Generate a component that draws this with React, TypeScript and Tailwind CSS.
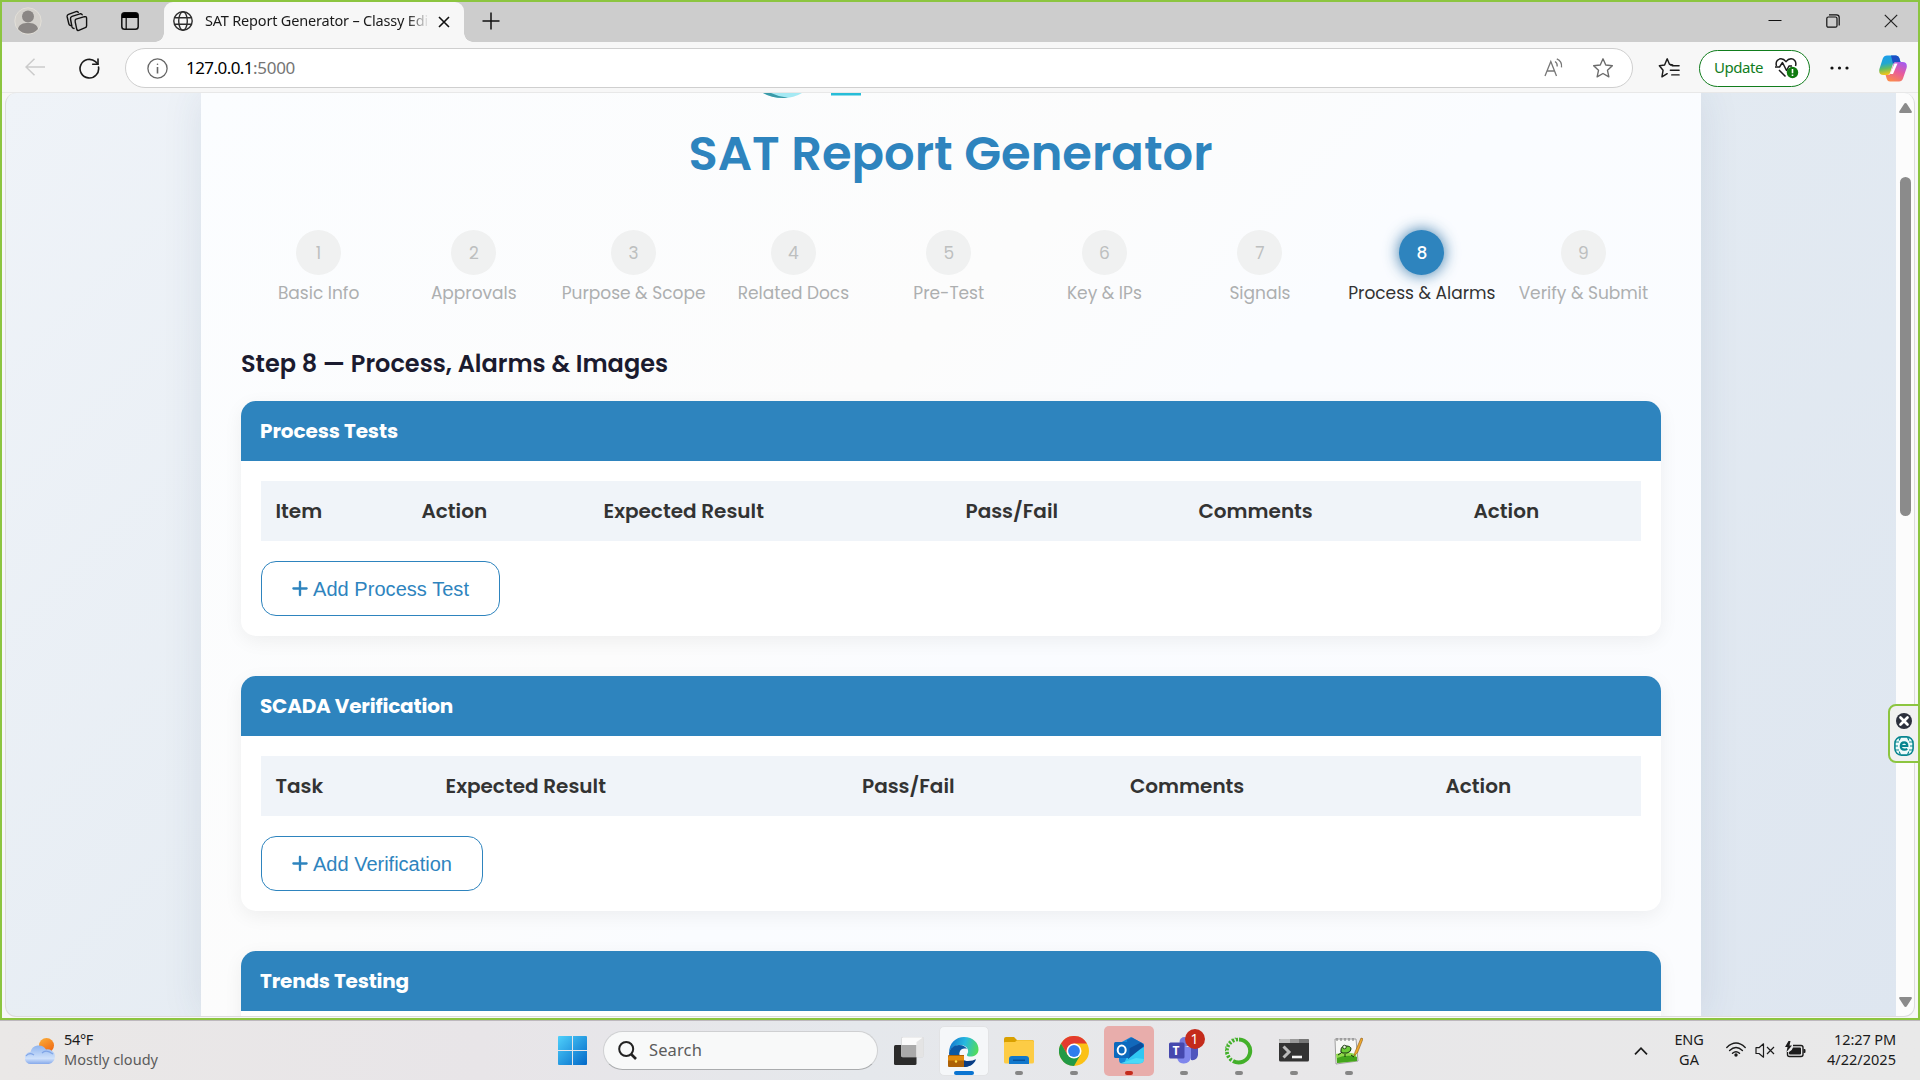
import { useLayoutEffect, useRef, type ReactNode } from "react";
import { FaPlus } from "react-icons/fa6";

/* Single line of text whose letter spacing is tuned so it spans `w` pixels. */
function Fit({ w, className = "", children }: { w: number; className?: string; children: string }) {
  const ref = useRef<HTMLSpanElement>(null);
  useLayoutEffect(() => {
    const el = ref.current;
    if (!el) return;
    el.style.letterSpacing = "0px";
    const natural = el.getBoundingClientRect().width;
    const gap = (w - natural) / children.length;
    el.style.letterSpacing = `${gap}px`;
  }, [w, children]);
  return (
    <span ref={ref} className={"inline-block shrink-0 whitespace-nowrap " + className}>
      {children}
    </span>
  );
}

const steps = [
  { label: "Basic Info", cell: "w-[155.2px]" },
  { label: "Approvals", cell: "w-[155.2px]" },
  { label: "Purpose & Scope", cell: "w-[164.4px]" },
  { label: "Related Docs", cell: "w-[155.2px]" },
  { label: "Pre-Test", cell: "w-[155.6px]" },
  { label: "Key & IPs", cell: "w-[155.6px]" },
  { label: "Signals", cell: "w-[155.6px]" },
  { label: "Process & Alarms", cell: "w-[168.2px]" },
  { label: "Verify & Submit", cell: "w-[155px]" },
];

function Stepper() {
  return (
    <div className="flex h-[76px]">
      {steps.map((s, i) => {
        const on = i === 7;
        return (
          <div key={s.label} className={"flex shrink-0 flex-col items-center " + s.cell}>
            <div
              className={
                "flex h-[45px] w-[45px] shrink-0 items-center justify-center rounded-full pt-px text-[17px] leading-none " +
                (on
                  ? "bg-[#2e84be] font-medium text-white shadow-[0_0_15px_rgba(32,105,160,0.9)]"
                  : "bg-[#f0f1f1] text-[#bdbfbf]")
              }
            >
              {i + 1}
            </div>
            <div className={"mt-[6px] whitespace-nowrap text-[17px] leading-6 " + (on ? "text-[#333]" : "text-[#adafb0]")}>
              {s.label}
            </div>
          </div>
        );
      })}
    </div>
  );
}

type Col = { label: string; cell: string };

function Card({ title, titleW, cols, button, buttonW }: { title: string; titleW: number; cols?: Col[]; button?: string; buttonW?: number }) {
  return (
    <section className="mb-10 h-[235px] shrink-0 overflow-hidden rounded-[15px] bg-white shadow-[0_5px_19px_rgba(0,0,0,0.06)]">
      <header className="flex h-[60px] items-center bg-[#2e84be] pl-[19px] text-[20px] font-bold text-white">
        <Fit w={titleW}>{title}</Fit>
      </header>
      {cols && button && buttonW && (
        <div className="p-5">
          <div className="flex h-[60px] items-center bg-[#f0f4f9] pl-[14.5px] text-[20px] font-semibold text-[#333]">
            {cols.map((c, i) => (
              <div key={i} className={"shrink-0 " + c.cell}>
                {c.label}
              </div>
            ))}
          </div>
          <button className="mt-5 flex h-[55px] items-center rounded-[15px] border border-[#2e84be] pl-[29px] pr-[30px] font-['Liberation_Sans',sans-serif] text-[20px] text-[#2e84be]">
            <FaPlus className="mr-[4px] h-[19px] w-[18px]" />
            <Fit w={buttonW}>{button}</Fit>
          </button>
        </div>
      )}
    </section>
  );
}

const processCols: Col[] = [
  { label: "Item", cell: "w-[146px]" },
  { label: "Action", cell: "w-[182px]" },
  { label: "Expected Result", cell: "w-[362px]" },
  { label: "Pass/Fail", cell: "w-[233px]" },
  { label: "Comments", cell: "w-[275px]" },
  { label: "Action", cell: "w-[80px]" },
];
const scadaCols: Col[] = [
  { label: "Task", cell: "w-[170px]" },
  { label: "Expected Result", cell: "w-[416.5px]" },
  { label: "Pass/Fail", cell: "w-[268px]" },
  { label: "Comments", cell: "w-[315.5px]" },
  { label: "Action", cell: "w-[80px]" },
];

function TabBar() {
  return (
    <div className="flex h-10 items-center bg-[#cdcdcd] pb-0.5">
      <svg className="ml-3 h-7 w-7" viewBox="0 0 28 28">
        <circle cx="14" cy="14" r="13.2" fill="#d3d0cb" stroke="#e2dfd8" strokeWidth="1" />
        <circle cx="14" cy="9.5" r="6" fill="#8a8684" />
        <path d="M4 22c1-5 5-6 10-6s9 1 10 6c-5 6-15 6-20 0z" fill="#8a8684" />
      </svg>
      <svg className="ml-[24px] h-[22px] w-[22px]" viewBox="0 0 22 22" fill="none" stroke="#111" strokeWidth="1.4" strokeLinejoin="round" strokeLinecap="round">
        <path d="M10 9.2l8.500-2.500q2-.5 2.100 1.500v7.500q0 1.500-1.300 2l-6.500 2.600q-1.600.5-2-1l-1.600-7.500q-.4-2 .8-2.600z" />
        <path d="M8 18.500q-1.600-.2-2-1.500L4.500 9q-.3-2 1.500-2.600L14 3.800q1.700-.4 2.200 1" />
        <path d="M4.500 15.500q-1.300-.3-1.600-1.500L1.200 7q-.4-2 1.300-2.600L10 1.600q1.500-.5 2.300.7" />
      </svg>
      <svg className="ml-[33px] h-[18px] w-[18px]" viewBox="0 0 18 18">
        <rect x=".8" y=".8" width="16.400" height="16.400" rx="2.800" fill="none" stroke="#111" strokeWidth="1.500" />
        <path d="M1 6V3q0-2 2-2h12q2 0 2 2v3z" fill="#000" />
        <path d="M5.200 6v11" stroke="#111" strokeWidth="1.300" />
      </svg>
      <div className="relative ml-[25px] flex h-10 w-[300px] items-center self-start rounded-t-[9px] bg-[#f7f7f7] pb-0.5">
        <span className="absolute bottom-0 left-[-9px] h-[9px] w-[9px] bg-[radial-gradient(circle_at_0_0,#cdcdcd_8.5px,#f7f7f7_9px)]" />
        <span className="absolute bottom-0 right-[-9px] h-[9px] w-[9px] bg-[radial-gradient(circle_at_100%_0,#cdcdcd_8.5px,#f7f7f7_9px)]" />
        <svg className="ml-[9px] h-5 w-5" viewBox="0 0 20 20" fill="none" stroke="#2d2d2d" strokeWidth="1.400">
          <circle cx="10" cy="10" r="9.200" />
          <ellipse cx="10" cy="10" rx="4.300" ry="9.200" />
          <path d="M1.600 6.700h16.800M1.600 13.300h16.800" />
        </svg>
        <div className="-mt-0.5 ml-[12px] flex w-[224px] overflow-hidden bg-linear-to-r from-[#1a1a1a] from-90% to-[#f7f7f7] bg-clip-text font-['Noto_Sans',sans-serif] text-[14.500px] leading-6 text-transparent">
          <Fit w={223}>SAT Report Generator – Classy Edi</Fit>
        </div>
        <svg className="ml-[9px] mt-0.5 h-3 w-3" viewBox="0 0 12 12" stroke="#111" strokeWidth="1.600">
          <path d="M1 1l10 10M11 1L1 11" />
        </svg>
      </div>
      <svg className="ml-[18px] h-[18px] w-[18px]" viewBox="0 0 18 18" stroke="#111" strokeWidth="1.500">
        <path d="M9 .5v17M.5 9h17" />
      </svg>
      <div className="ml-auto mr-[20px] flex items-center">
        <svg className="h-[14px] w-[14px]" viewBox="0 0 14 14" stroke="#111" strokeWidth="1">
          <path d="M.5 6.500h13" />
        </svg>
        <svg className="ml-[44px] h-[14px] w-[14px]" viewBox="0 0 14 14" fill="none" stroke="#111" strokeWidth="1.200">
          <rect x=".8" y="3" width="10.200" height="10.200" rx="1.500" />
          <path d="M3 .8h7.500q2.700 0 2.700 2.700v8" />
        </svg>
        <svg className="ml-[44px] h-[14px] w-[14px]" viewBox="0 0 14 14" stroke="#222" strokeWidth="1.200">
          <path d="M.8.8l12.400 12.400M13.200.8L.8 13.200" />
        </svg>
      </div>
    </div>
  );
}

function Toolbar() {
  return (
    <div className="flex h-[51px] items-center border-b border-[#e8e8e8] bg-[#f7f7f7] pt-0.5 font-['Noto_Sans',sans-serif]">
      <svg className="ml-[23px] h-[18px] w-5 -translate-y-px" viewBox="0 0 20 18" fill="none" stroke="#cbcbcb" strokeWidth="1.500">
        <path d="M20 9H1M9.500.7L1 9l8.500 8.300" />
      </svg>
      <svg className="ml-[34px] h-[21px] w-[21px]" viewBox="0 0 21 21" fill="none" stroke="#1b1b1b" strokeWidth="1.600" strokeLinecap="round">
        <path d="M19.500 9a9.300 9.300 0 1 1-3-5.300L18.800 6" />
        <path d="M19 1v5.300h-5.300" />
      </svg>
      <div className="ml-[25px] flex h-10 w-[1508px] shrink-0 items-center rounded-full border border-[#cfcfcf] bg-white">
        <svg className="ml-[21px] h-[21px] w-[21px]" viewBox="0 0 21 21" fill="none" stroke="#666" strokeWidth="1.300">
          <circle cx="10.500" cy="10.500" r="9.600" />
          <path d="M10.500 9v6.500" strokeWidth="1.600" />
          <circle cx="10.500" cy="6.300" r=".8" fill="#666" stroke="none" />
        </svg>
        <div className="-mt-0.5 ml-[18px] flex text-[17px] leading-none text-black">
          <Fit w={67}>127.0.0.1</Fit>
          <Fit w={42} className="text-[#757575]">:5000</Fit>
        </div>
        <svg className="ml-auto h-5 w-[20px]" viewBox="0 0 20 20" fill="none" stroke="#777" strokeWidth="1.300">
          <path d="M1 18L6.800 3.500 12.500 18M3 13h7.700" />
          <path d="M11 3.500q2.500 1.500 2.200 5M12.800.9q5.500 2.500 4.700 8.500" />
        </svg>
        <svg className="ml-[28px] mr-[18px] h-[22px] w-[22px]" viewBox="0 0 24 24" fill="none" stroke="#6b6b6b" strokeWidth="1.500" strokeLinejoin="round">
          <path d="M12 2l3 6.700 7.200.8-5.300 5 1.500 7.200L12 18l-6.400 3.700 1.500-7.200-5.300-5 7.200-.8z" />
        </svg>
      </div>
      <svg className="ml-[25px] h-[22px] w-[22px] shrink-0" viewBox="0 0 24 24" fill="none" stroke="#1b1b1b" strokeWidth="1.600" strokeLinejoin="round" strokeLinecap="round">
        <path d="M13.500 8.700H16L12.500 8 10 2 7.200 8.700 1.500 9.500l4 5L4.300 21.700l5.700-3.500M15.500 9.500H23M13.500 14.500H23M15 19.500h8" />
      </svg>
      <div className="ml-[19px] flex h-[37px] w-[111px] shrink-0 items-center rounded-full border-[1.5px] border-[#117d1d] bg-white text-[15px] text-[#117d1d]">
        <Fit w={49} className="-mt-0.5 ml-[14px] leading-none">Update</Fit>
        <svg className="ml-[12px] h-[21px] w-[24px]" viewBox="0 0 24 21" fill="none" stroke="#1b1b1b" strokeWidth="1.500" strokeLinejoin="round">
          <path d="M1.500 8C0 3 3.500.8 6 .8c2.500 0 4 1.500 5 2.800 1-1.300 2.500-2.800 5-2.800S22 3 20.500 8M4 12l6.500 6.500" />
          <path d="M0 9h4.500l3-4.500 4 8L14 8h3" />
          <circle cx="17.500" cy="14.500" r="5.700" fill="#0f7b0f" stroke="none" />
          <path d="M17.500 11v4.200M17.500 16.500v1.500" stroke="#fff" strokeWidth="1.600" />
        </svg>
      </div>
      <svg className="ml-[20px] h-1 w-[19px] shrink-0" viewBox="0 0 19 4" fill="#111">
        <circle cx="2" cy="2" r="1.600" />
        <circle cx="9.500" cy="2" r="1.600" />
        <circle cx="17" cy="2" r="1.600" />
      </svg>
      <svg className="ml-[30px] h-[27px] w-[28px] shrink-0" viewBox="0 0 28 27">
        <defs>
          <linearGradient id="cpA" x1="0" y1="0" x2=".2" y2="1">
            <stop offset="0" stopColor="#1b9cf0" />
            <stop offset=".45" stopColor="#22a7d0" />
            <stop offset=".7" stopColor="#65bd62" />
            <stop offset="1" stopColor="#f5c518" />
          </linearGradient>
          <linearGradient id="cpB" x1=".8" y1="0" x2=".3" y2="1">
            <stop offset="0" stopColor="#a35cf0" />
            <stop offset=".5" stopColor="#e85b9c" />
            <stop offset="1" stopColor="#fb8a4c" />
          </linearGradient>
        </defs>
        <path d="M8 .5h9q2.500 0 3.300 2.500L21.500 7H17q-2.500 0-3.200 2.500L11 18q-.8 2-2.500 2H4.500Q-.8 20 .4 14L3.800 3.500Q5 .5 8 .5z" fill="url(#cpA)" />
        <path d="M12 .5h5q2.500 0 3.300 2.500L21.500 7H17q-2 0-3 2z" fill="#1c4fc4" />
        <path d="M20 26.500h-9q-2.500 0-3.200-2.500L6.600 20H9q2 0 2.800-2L14.500 9q.7-2 2.500-2h6.500q5.300 0 4.100 6L24 23.500q-1 3-4 3z" fill="url(#cpB)" />
        <path d="M15.500 8.500h3L14 19h-3z" fill="#fff" />
      </svg>
    </div>
  );
}

function Viewport() {
  return (
    <div className="mx-[3px] flex h-[924px] overflow-hidden rounded-[11px] border-x border-b border-[#dcdcdc] bg-[linear-gradient(135deg,#eff3f8_0%,#e4ebf2_50%,#dee6f0_100%)]">
      <div className="flex w-[1890px] shrink-0 justify-center">
        <main className="relative flex h-[923px] w-[1500px] flex-col bg-[linear-gradient(135deg,#fbfdff_0%,#fcfcfc_40%,#fafcff_55%,#fbfcfe_100%)] px-10 shadow-[0_0_38px_rgba(40,70,110,0.1)]">
          <svg className="absolute left-[561px] top-0 h-[6px] w-[102px]" viewBox="0 0 102 6">
            <path d="M1 0h39q-8 5-19 5T1 0z" fill="#a5e9f3" />
            <path d="M1 0h8q8 4 17 4.800Q11 6 1 0z" fill="#3a9aa8" />
            <path d="M69 0h30v2.500H69z" fill="#27bdd8" />
          </svg>
          <h1 className="mt-[37px] flex h-12 shrink-0 items-center justify-center whitespace-nowrap pr-px text-[48px] font-semibold leading-none text-[#2e84be]">
            SAT Report Generator
          </h1>
          <div className="mt-[52px] shrink-0">
            <Stepper />
          </div>
          <h2 className="mb-[25px] mt-[46px] flex h-6 shrink-0 items-center whitespace-nowrap text-[24px] font-semibold leading-none text-[#1b1b2f]">
            Step 8 — Process, Alarms & Images
          </h2>
          <Card title="Process Tests" titleW={138} cols={processCols} button="Add Process Test" buttonW={156} />
          <Card title="SCADA Verification" titleW={193} cols={scadaCols} button="Add Verification" buttonW={139} />
          <Card title="Trends Testing" titleW={149} />
        </main>
      </div>
      <div className="flex w-[18px] shrink-0 flex-col items-center bg-[#fcfcfc]">
        <svg className="mt-[10px] h-[10px] w-[13px]" viewBox="0 0 13 10">
          <path d="M6.500 0q.8 0 1.300.8L12.800 8.500q.3 1.300-.8 1.500H1Q-.1 9.800.2 8.500L5.200.8Q5.700 0 6.500 0z" fill="#8b8b8b" />
        </svg>
        <div className="mt-[64px] h-[339px] w-[11px] rounded-full bg-[#8b8b8b]" />
        <svg className="mb-[9px] mt-auto h-[10px] w-[13px] rotate-180" viewBox="0 0 13 10">
          <path d="M6.500 0q.8 0 1.300.8L12.800 8.500q.3 1.300-.8 1.500H1Q-.1 9.800.2 8.500L5.200.8Q5.700 0 6.500 0z" fill="#8b8b8b" />
        </svg>
      </div>
    </div>
  );
}

function TaskItem({ children, tile = "", dot = "w-2 bg-[#868686]" }: { children: ReactNode; tile?: string; dot?: string }) {
  return (
    <div className="flex w-[55px] justify-center">
      <div className={"flex h-[50px] w-[50px] flex-col items-center rounded-[5px] pt-[8px] " + tile}>
        <div className="flex h-[34px] w-8 items-center justify-center">{children}</div>
        <div className={"mt-[3px] h-1 shrink-0 rounded-full " + dot} />
      </div>
    </div>
  );
}

function Taskbar() {
  return (
    <footer className="flex h-[60px] items-center border-t border-[#bdb8bd] bg-[linear-gradient(90deg,#eae8e7,#e8e5e8_25%,#e5e8ec_45%,#e8e7e9_65%,#e9e9e9)] font-['Noto_Sans',sans-serif] text-[#1b1b1b]">
      <svg className="ml-[25px] h-[26px] w-[30px]" viewBox="0 0 30 26">
        <defs>
          <linearGradient id="sun" x1="0" y1="0" x2=".6" y2="1">
            <stop offset="0" stopColor="#fbb03a" />
            <stop offset="1" stopColor="#f06a14" />
          </linearGradient>
          <linearGradient id="cloud" x1="0" y1="0" x2="0" y2="1">
            <stop offset="0" stopColor="#8fb4ee" />
            <stop offset=".7" stopColor="#cfe1fb" />
            <stop offset="1" stopColor="#86a9ea" />
          </linearGradient>
        </defs>
        <circle cx="21.500" cy="7.500" r="7.500" fill="url(#sun)" />
        <path d="M6 26a6 6 0 0 1-.5-12A8.500 8.500 0 0 1 21 11.500a7.300 7.300 0 0 1 3 14.500z" fill="url(#cloud)" />
        <path d="M1 18q3-4 8-1M17 15q4-4 11 1" fill="none" stroke="#80a5e6" strokeWidth="1.200" />
      </svg>
      <div className="-mt-[3px] ml-[9px] flex w-[494px] flex-col text-[14.500px] leading-5">
        <Fit w={29} className="w-fit">54°F</Fit>
        <Fit w={94} className="w-fit text-[#5b5b5b]">Mostly cloudy</Fit>
      </div>
      <svg className="h-[29px] w-[29px]" viewBox="0 0 29 29">
        <defs>
          <linearGradient id="win" x1="0" y1="0" x2="1" y2="1">
            <stop offset="0" stopColor="#4fd0fb" />
            <stop offset="1" stopColor="#0268c8" />
          </linearGradient>
        </defs>
        <path d="M1 0h13v14H0V1q0-1 1-1zM15 0h13q1 0 1 1v13H15zM0 15h14v14H1q-1 0-1-1zM15 15h14v13q0 1-1 1H15z" fill="url(#win)" />
      </svg>
      <div className="ml-[16px] flex h-[39px] w-[275px] items-center rounded-full border border-[#cfd0d2] border-b-[#aaacae] bg-[#f8f9f9]">
        <svg className="ml-[14px] h-[19px] w-[19px]" viewBox="0 0 19 19" fill="none" stroke="#222" strokeWidth="2">
          <circle cx="8.200" cy="8" r="7" />
          <path d="M13 13l5 5" strokeWidth="2.600" />
        </svg>
        <Fit w={53} className="ml-[12px] text-[16.500px] leading-none text-[#5c5c5c]">Search</Fit>
      </div>
      <svg className="ml-[16px] h-7 w-[30px]" viewBox="0 0 30 28">
        <rect x="0" y="8" width="22.500" height="20" rx="1.500" fill="#2b2b2b" />
        <rect x="7.500" y="0" width="22" height="20" rx="1.500" fill="#fbfbfb" stroke="#ccc" strokeWidth=".6" />
        <path d="M7.500 8h15v12h-15z" fill="#aaa" />
        <path d="M22.500 5v15H29.500V0z" fill="#e4e4e4" />
      </svg>
      <div className="ml-[12px] flex">
        <TaskItem tile="bg-[#f5f7f9] border border-[#e2e3e5]" dot="w-5 bg-[#0a74d1]">
          <svg className="h-[31px] w-[31px]" viewBox="0 0 31 31">
            <defs>
              <linearGradient id="edge" x1="0" y1=".4" x2="1" y2=".6">
                <stop offset="0" stopColor="#1478cf" />
                <stop offset=".5" stopColor="#27b9e0" />
                <stop offset="1" stopColor="#53dd56" />
              </linearGradient>
            </defs>
            <path d="M1 17C1 7 8 1 16 1c9 0 15 6 14.500 13-.4 5-5 7-9.500 6.500-3-.4-2-2-1-4C21 12 17 9 12 9 6 9 2 13 1 17z" fill="url(#edge)" />
            <path d="M1 17c1-5 5-8 10-8 4 0 7 2 8 4-6-2-9 3-7 8 2 6 9 8 16 3-3 5-7 7-12 7C7 31 1 24 1 17z" fill="#0c58a4" />
            <path d="M11 18c0 5 5 7 9 7s6-1 8-2c-2 5-7 8-12 8z" fill="#0a3d83" />
            <path d="M0 20q0-1 1-1h15v12H1q-1 0-1-1z" fill="#ad6207" />
            <path d="M0 21.500q0-1.500 1-1.500h15v4.500H0z" fill="#e28b0d" />
            <circle cx="8" cy="25.500" r="1.200" fill="#ffe14d" />
          </svg>
        </TaskItem>
        <TaskItem>
          <svg className="h-[27px] w-[30px]" viewBox="0 0 30 27">
            <path d="M0 2q0-2 2-2h8l3 3h15q2 0 2 2v10H0z" fill="#d9a000" />
            <path d="M0 6q0-1 1-1h10l2-1.700h15q2 0 2 2V25q0 1.500-2 1.500H2Q0 26.500 0 25z" fill="#fdcc45" />
            <path d="M5 27v-5q0-3 3-3h14q3 0 3 3v5z" fill="#1278cc" />
            <path d="M9 22.500h12v1.500H9z" fill="#07529c" />
          </svg>
        </TaskItem>
        <TaskItem>
          <svg className="h-[30px] w-[30px]" viewBox="0 0 30 30">
            <circle cx="15" cy="15" r="15" fill="#fbc116" />
            <path d="M2 7.500A15 15 0 0 1 28 7.500H15L8.500 18.700z" fill="#e33b2e" />
            <path d="M2 7.500A15 15 0 0 0 15 30l6.500-11.300H8.500z" fill="#229a46" />
            <circle cx="15" cy="15" r="7.500" fill="#fff" />
            <circle cx="15" cy="15" r="5.900" fill="#2f7ded" />
          </svg>
        </TaskItem>
        <TaskItem tile="bg-[#e8adab]" dot="w-2 bg-[#c42b1c]">
          <svg className="h-[27px] w-[30px]" viewBox="0 0 30 27">
            <path d="M5 6.500L17 0l13 7v12q0 7-6 7.500H8q-3 0-3-4z" fill="#1487d8" />
            <path d="M13 3L18 .5 29.500 7 15 18z" fill="#1268ba" />
            <path d="M13 20L30 10v12q0 4.500-5 4.500H10z" fill="#30c7f3" />
            <path d="M14 12L27 5.500l3 3.500-16 13z" fill="#0b4c9a" />
            <path d="M6 26.500L22 21l8 1q0 4-5 4.500z" fill="#4bdaf8" />
            <rect y="5" width="15.500" height="16" rx="1.500" fill="#0c69bd" />
            <ellipse cx="7.700" cy="13" rx="4" ry="4.500" fill="none" stroke="#fff" strokeWidth="2" />
          </svg>
        </TaskItem>
        <TaskItem>
          <div className="relative">
            <svg className="h-[27px] w-[30px]" viewBox="0 0 30 27">
              <circle cx="15.500" cy="5" r="5" fill="#7479dc" />
              <path d="M19 11h10v7q-1 6-7 5z" fill="#4f55bd" />
              <path d="M9 10h13v10q-1 6-7 6.500T8 20z" fill="#7f86ec" />
              <rect y="5.500" width="15.500" height="16" rx="1.500" fill="#4548ae" />
            </svg>
            <span className="absolute left-[4px] top-[7px] text-[12px] font-bold leading-[13px] text-white">T</span>
            <span className="absolute left-[16px] top-[-8px] flex h-5 w-5 items-center justify-center rounded-full bg-[#c42b1c] text-[14px] leading-none text-white">1</span>
          </div>
        </TaskItem>
        <TaskItem>
          <svg className="h-[28px] w-[28px]" viewBox="0 0 28 28" fill="none" stroke="#43b02a">
            <path d="M14 2.500A11.500 11.500 0 1 1 8 24" strokeWidth="4" />
            <path d="M13 2.500A11.500 11.500 0 0 0 7 23.500" strokeWidth="3.600" strokeDasharray="2.200 1.500" />
            <path d="M11 1A12.500 12.500 0 0 0 5 23" strokeWidth="1.200" strokeDasharray="1.400 2" />
          </svg>
        </TaskItem>
        <TaskItem>
          <svg className="h-[23px] w-[30px]" viewBox="0 0 30 23">
            <rect width="30" height="22.500" rx="1.500" fill="#333" />
            <path d="M0 4V1.500Q0 0 1.500 0H11v4z" fill="#c0c0c0" />
            <path d="M11 0h9v4h-9z" fill="#999" />
            <path d="M20 0h8.500Q30 0 30 1.500V4H20z" fill="#777" />
            <path d="M4.500 7.500l5.500 5.500-5.500 5.500" fill="none" stroke="#bbb" strokeWidth="3" />
            <path d="M13 18h10" stroke="#f5f5f5" strokeWidth="2.600" />
          </svg>
        </TaskItem>
        <TaskItem>
          <svg className="h-[28px] w-[29px]" viewBox="0 0 29 28">
            <path d="M1 2h21l2 22-22 3z" fill="#f7f7f5" stroke="#8b8b8b" strokeWidth=".8" />
            <path d="M2 17q10-3 20 0l1 7-20 2z" fill="#8fd94a" />
            <path d="M3 21q10-4 20-1v4L3 26z" fill="#43a51c" />
            <path d="M3 1v3M7 1v3M11 1v3M15 1v3M19 1v3" stroke="#777" strokeWidth="1" />
            <path d="M7 13q0-4 5-4 5 0 5 3 0 3-4 4H9q-3 0-2-3z" fill="#6ccb37" stroke="#17330c" strokeWidth="1" />
            <circle cx="10.500" cy="10" r="1.800" fill="#eaf8dc" stroke="#17330c" strokeWidth=".8" />
            <path d="M4 18l3-2M17 18l3 2M11 17v3" stroke="#17330c" strokeWidth="1" />
            <path d="M20 19l1-4L27 1l2 .8-5.500 14z" fill="#efa92c" stroke="#8d5b18" strokeWidth=".6" />
          </svg>
        </TaskItem>
      </div>
      <svg className="ml-auto h-2 w-[14px]" viewBox="0 0 14 8" fill="none" stroke="#1b1b1b" strokeWidth="1.700">
        <path d="M1 7.300L7 1.200l6 6.100" />
      </svg>
      <div className="-mt-[3px] ml-[26px] flex w-[30px] flex-col items-center text-[14.500px] leading-5">
        <Fit w={29}>ENG</Fit>
        <Fit w={20}>GA</Fit>
      </div>
      <svg className="-mt-[2px] ml-[22px] h-[15px] w-5" viewBox="0 0 20 15" fill="none" stroke="#1b1b1b" strokeWidth="1.400" strokeLinecap="round">
        <path d="M.8 5.500q9.200-8.800 18.400 0M3.600 8.500q6.400-6 12.800 0M6.500 11.200q3.500-3 7 0" />
        <circle cx="10" cy="13" r="1.700" fill="#1b1b1b" stroke="none" />
      </svg>
      <svg className="-mt-px ml-[9px] h-[15px] w-[20px]" viewBox="0 0 20 15" fill="none" stroke="#1b1b1b" strokeWidth="1.200" strokeLinejoin="round">
        <path d="M1 4.700h3L8.500.8v13.400L4 10.500H1z" />
        <path d="M12 4l7 7M19 4l-7 7" />
      </svg>
      <svg className="-mt-[3px] ml-[10px] h-[17px] w-[21px]" viewBox="0 0 21 17">
        <path d="M8 4.500h8q2 0 2 2v7q0 2-2 2H4.500q-2 0-2-2V11" fill="none" stroke="#1b1b1b" strokeWidth="1.400" />
        <path d="M8 6.500h7q1 0 1 1v5q0 1-1 1H5q-1 0-1-1V11q3-1 4-4.500z" fill="#1b1b1b" />
        <path d="M18.500 8h1q1 0 1 1v2q0 1-1 1h-1zM3.500 0L0 6h2.500L1.500 11 7 4.500H4.500L5.500 0z" fill="#1b1b1b" />
      </svg>
      <div className="-mt-[3px] ml-[20px] mr-[24px] flex w-[70px] flex-col items-end text-[14.500px] leading-5">
        <Fit w={62}>12:27 PM</Fit>
        <Fit w={69}>4/22/2025</Fit>
      </div>
    </footer>
  );
}

export default function App() {
  return (
    <div className="h-[1080px] w-[1920px] overflow-hidden bg-[#e9e9e9] font-['Poppins','Inter',sans-serif]">
      <div className="relative h-[1020px] border-2 border-[#8cc540] bg-[#f7f7f7]">
        <TabBar />
        <Toolbar />
        <Viewport />
        <div className="absolute right-[-2px] top-[702px] flex h-[59px] w-[32px] flex-col items-center rounded-l-[8px] border-2 border-[#8cc540] bg-[#f1f1f1] pt-[7px]">
          <svg className="h-4 w-4" viewBox="0 0 16 16">
            <circle cx="8" cy="8" r="8" fill="#2c303d" />
            <path d="M4.500 4.500l7 7M11.500 4.500l-7 7" stroke="#fff" strokeWidth="2.700" strokeLinecap="round" />
          </svg>
          <svg className="mt-[7px] h-5 w-5" viewBox="0 0 20 20" fill="none" stroke="#07858f" strokeWidth="1.600">
            <rect x=".9" y=".9" width="18.200" height="18.200" rx="6.500" fill="#eefafa" />
            <path d="M1 6h4M15 6h4M1 14h4M15 14h4M6.500 1.500q-1 1.500-1.200 3M13.500 1.500q1 1.500 1.200 3M6.500 18.500q-1-1.500-1.200-3M13.500 18.500q1-1.500 1.200-3M1 10h3M16 10h3" strokeWidth="1.200" />
            <path d="M6.800 10h6.500q0-3.600-3.200-3.600T6.800 10q0 3.600 3.600 3.600 1.800 0 2.800-.9" strokeWidth="2.200" />
          </svg>
        </div>
      </div>
      <Taskbar />
    </div>
  );
}
